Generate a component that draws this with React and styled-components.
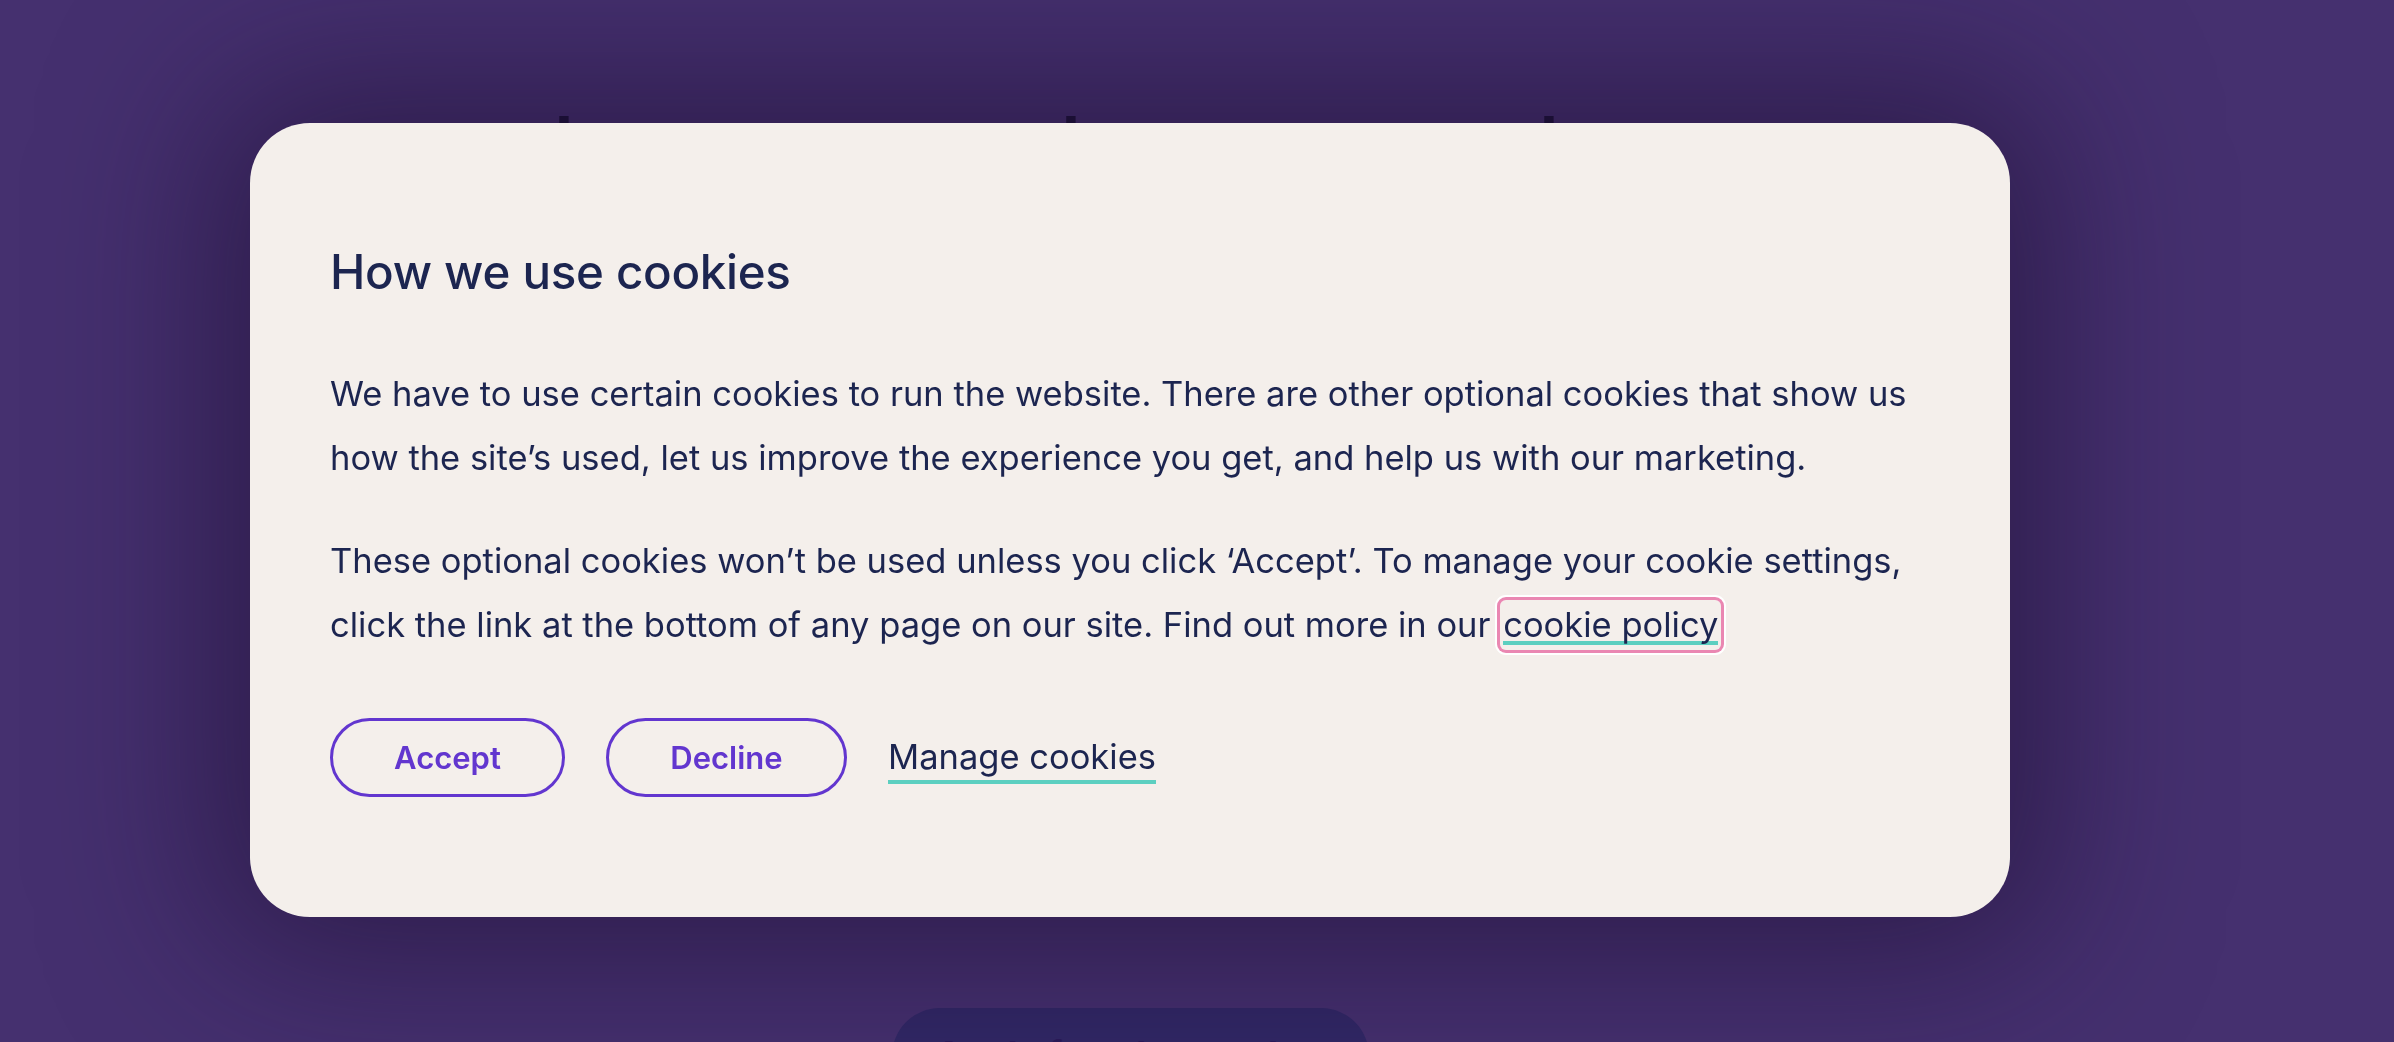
import React from 'react';
import styled, { createGlobalStyle } from 'styled-components';

const Global = createGlobalStyle`
  html, body {
    margin: 0;
    padding: 0;
    height: 100%;
    overflow: hidden;
    background: #45306f;
  }
  body {
    font-family: Inter, "Liberation Sans", sans-serif;
    -webkit-font-smoothing: antialiased;
  }
`;

const Page = styled.main`
  height: 100vh;
  overflow: hidden;
  box-sizing: border-box;
  padding: 0 134px 0 0;
  display: flex;
  flex-direction: column;
  align-items: center;
`;

const BackdropHeading = styled.h1`
  margin: 105px 0 0;
  font-size: 64px;
  line-height: 1.1;
  font-weight: 700;
  color: #1c1238;
  letter-spacing: -0.5px;
  white-space: nowrap;
`;

const BackdropButton = styled.div`
  margin-top: 833px;
  flex-shrink: 0;
  width: 477px;
  height: 100px;
  border-radius: 48px;
  background: #312866;
  color: #2a1a5a;
  font-size: 36px;
  font-weight: 700;
  display: flex;
  align-items: flex-start;
  padding: 24px 0 0 44px;
  box-sizing: border-box;
`;

const Overlay = styled.div`
  position: fixed;
  inset: 0;
  display: flex;
  justify-content: center;
  align-items: flex-start;
  padding: 123px 134px 0 0;
`;

const Dialog = styled.section`
  width: 1760px;
  box-sizing: border-box;
  padding: 120px 80px 120px;
  background: #f4efeb;
  border-radius: 60px;
  box-shadow: 0 0 160px 40px rgba(28, 12, 48, 0.55);
  color: #1c2550;
`;

const Title = styled.h2`
  margin: 0 0 62px;
  font-size: 47.5px;
  line-height: 1.2;
  font-weight: 500;
  letter-spacing: -0.3px;
`;

const Body = styled.p`
  margin: 0 0 39px;
  font-size: 34.5px;
  line-height: 64px;
  font-weight: 400;
`;

const PolicyLink = styled.a`
  color: inherit;
  text-decoration: none;
  display: inline-block;
  line-height: 50px;
  padding: 0 3px;
  border-radius: 6px;
  background: linear-gradient(#5ccfc0, #5ccfc0) no-repeat left 3px bottom 5px / calc(100% - 6px) 4px;
  box-shadow: 0 0 0 3px #ea87b2, 0 0 0 5px #ffffff;
`;

const Actions = styled.div`
  display: flex;
  align-items: center;
  gap: 41px;
  margin-top: 61px;
`;

const PillButton = styled.button`
  width: ${(p) => p.$w}px;
  height: 79px;
  box-sizing: border-box;
  border: 3.5px solid #6236cf;
  border-radius: 40px;
  background: transparent;
  color: #6236cf;
  font-family: inherit;
  font-size: 31px;
  font-weight: 600;
  cursor: pointer;
`;

const ManageLink = styled.a`
  color: #1c2550;
  font-size: 34.5px;
  text-decoration: none;
  padding-bottom: 3px;
  border-bottom: 4px solid #5ccfc0;
  margin-top: 5px;
`;

export default function App() {
  return (
    <>
      <Global />
      <Page aria-hidden="true">
        <BackdropHeading>borrow more and repay as you please</BackdropHeading>
        <BackdropButton>Apply for a loan today</BackdropButton>
      </Page>
      <Overlay>
        <Dialog role="dialog" aria-labelledby="cookie-title">
          <Title id="cookie-title">How we use cookies</Title>
          <Body>
            We have to use certain cookies to run the website. There are other optional cookies that show us how the site’s used, let us improve the experience you get, and help us with our marketing.
          </Body>
          <Body>
            These optional cookies won’t be used unless you click ‘Accept’. To manage your cookie settings, click the link at the bottom of any page on our site. Find out more in our <PolicyLink href="#">cookie policy</PolicyLink>
          </Body>
          <Actions>
            <PillButton $w={235}>Accept</PillButton>
            <PillButton $w={241}>Decline</PillButton>
            <ManageLink href="#">Manage cookies</ManageLink>
          </Actions>
        </Dialog>
      </Overlay>
    </>
  );
}
